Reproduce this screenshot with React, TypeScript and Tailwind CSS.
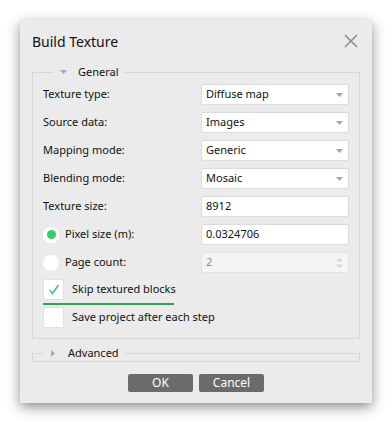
import React from "react";

const FONT = { fontFamily: '"Noto Sans", "Open Sans", sans-serif' };

function Combo({ value }: { value: string }) {
  return (
    <div className="flex h-[21px] w-[148px] items-center justify-between rounded-[2px] border border-[#dcdcdc] bg-white pl-[4px] pr-[5px] text-[11px] text-[#111]">
      <span>{value}</span>
      <svg width="7" height="4" viewBox="0 0 7 4">
        <path d="M0 0h7L3.5 4z" fill="#a8a8a8" />
      </svg>
    </div>
  );
}

function TextBox({ value, disabled }: { value: string; disabled?: boolean }) {
  return (
    <div
      className={`flex h-[21px] w-[148px] items-center justify-between rounded-[2px] border pl-[4px] pr-[4px] text-[11px] ${
        disabled
          ? "border-[#e2e2e2] bg-[#f4f4f4] text-[#8a8a8a]"
          : "border-[#dcdcdc] bg-white text-[#111]"
      }`}
    >
      <span>{value}</span>
      {disabled && (
        <svg width="9" height="14" viewBox="0 0 9 14">
          <path d="M1 5.5h7L4.5 1.5z" fill="#d8d8d8" />
          <path d="M1 8.5h7L4.5 12.5z" fill="#d8d8d8" />
        </svg>
      )}
    </div>
  );
}

function Row({ label, children }: { label: React.ReactNode; children: React.ReactNode }) {
  return (
    <div className="flex h-[21px] items-center justify-between">
      <div className="flex items-center text-[11px] text-[#111]">{label}</div>
      {children}
    </div>
  );
}

function Radio({ on }: { on?: boolean }) {
  return (
    <span className="mr-[6px] flex h-[16px] w-[16px] items-center justify-center rounded-full bg-white">
      {on && <span className="h-[9px] w-[9px] rounded-full bg-[#2fd064]" />}
    </span>
  );
}

function Check({ checked, label }: { checked?: boolean; label: string }) {
  return (
    <div className="flex h-[21px] items-center text-[11px] text-[#111]">
      <span className="mr-[8px] flex h-[21px] w-[21px] items-center justify-center rounded-[2px] border border-[#e0e0e0] bg-white">
        {checked && (
          <svg width="12" height="11" viewBox="0 0 12 11">
            <path d="M1.5 6l3 3.5 6-8.5" fill="none" stroke="#3ccd68" strokeWidth="1.6" />
          </svg>
        )}
      </span>
      <span>{label}</span>
    </div>
  );
}

function Legend({ label, open }: { label: string; open?: boolean }) {
  return (
    <legend className="ml-[10px] flex h-[16px] items-center px-[4px] text-[11px] text-[#111]">
      <span className="flex w-[12px] justify-center">
        {open ? (
          <svg width="7" height="4" viewBox="0 0 7 4">
            <path d="M0 0h7L3.5 4z" fill="#a8a8a8" />
          </svg>
        ) : (
          <svg width="4" height="7" viewBox="0 0 4 7">
            <path d="M0 0v7L4 3.5z" fill="#a8a8a8" />
          </svg>
        )}
      </span>
      <span className="ml-[9px] pr-[2px]">{label}</span>
    </legend>
  );
}

export default function App() {
  return (
    <div className="h-[422px] w-[392px] bg-white pl-[20px] pt-[20px]" style={FONT}>
      <div className="flex h-[383px] w-[352px] flex-col bg-[#ebebeb] px-[12px] shadow-[0_4px_12px_rgba(0,0,0,0.45)]">
        {/* Title */}
        <div className="flex h-[44px] items-center justify-between pb-[2px]">
          <span className="text-[14px] text-[#111]">Build Texture</span>
          <svg width="14" height="14" viewBox="0 0 14 14" className="mr-[2px]">
            <path d="M1 1l12 12M13 1L1 13" stroke="#8a8a8a" strokeWidth="1.5" />
          </svg>
        </div>

        {/* General */}
        <fieldset className="border border-[#d6d6d6] px-[10px] pb-[10px] pt-[4px]">
          <Legend label="General" open />
          <div className="flex flex-col gap-[7px]">
            <Row label="Texture type:">
              <Combo value="Diffuse map" />
            </Row>
            <Row label="Source data:">
              <Combo value="Images" />
            </Row>
            <Row label="Mapping mode:">
              <Combo value="Generic" />
            </Row>
            <Row label="Blending mode:">
              <Combo value="Mosaic" />
            </Row>
            <Row label="Texture size:">
              <TextBox value="8912" />
            </Row>
            <Row
              label={
                <>
                  <Radio on />
                  Pixel size (m):
                </>
              }
            >
              <TextBox value="0.0324706" />
            </Row>
            <Row
              label={
                <>
                  <Radio />
                  Page count:
                </>
              }
            >
              <TextBox value="2" disabled />
            </Row>
          </div>
          <div className="mt-[6px]">
            <Check checked label="Skip textured blocks" />
            <div className="mt-[3px] h-[2px] w-[131px] bg-[#2aa84c]" />
            <div className="mt-[2px]">
              <Check label="Save project after each step" />
            </div>
          </div>
        </fieldset>

        {/* Advanced */}
        <fieldset className="mt-[6px] border border-[#d6d6d6]">
          <Legend label="Advanced" />
        </fieldset>

        {/* Buttons */}
        <div className="mt-[12px] flex justify-center gap-[6px]">
          <button className="h-[18px] w-[65px] rounded-[2px] bg-[#6b6b6b] text-[12px] leading-none text-white">
            OK
          </button>
          <button className="h-[18px] w-[65px] rounded-[2px] bg-[#6b6b6b] text-[12px] leading-none text-white">
            Cancel
          </button>
        </div>
      </div>
    </div>
  );
}
